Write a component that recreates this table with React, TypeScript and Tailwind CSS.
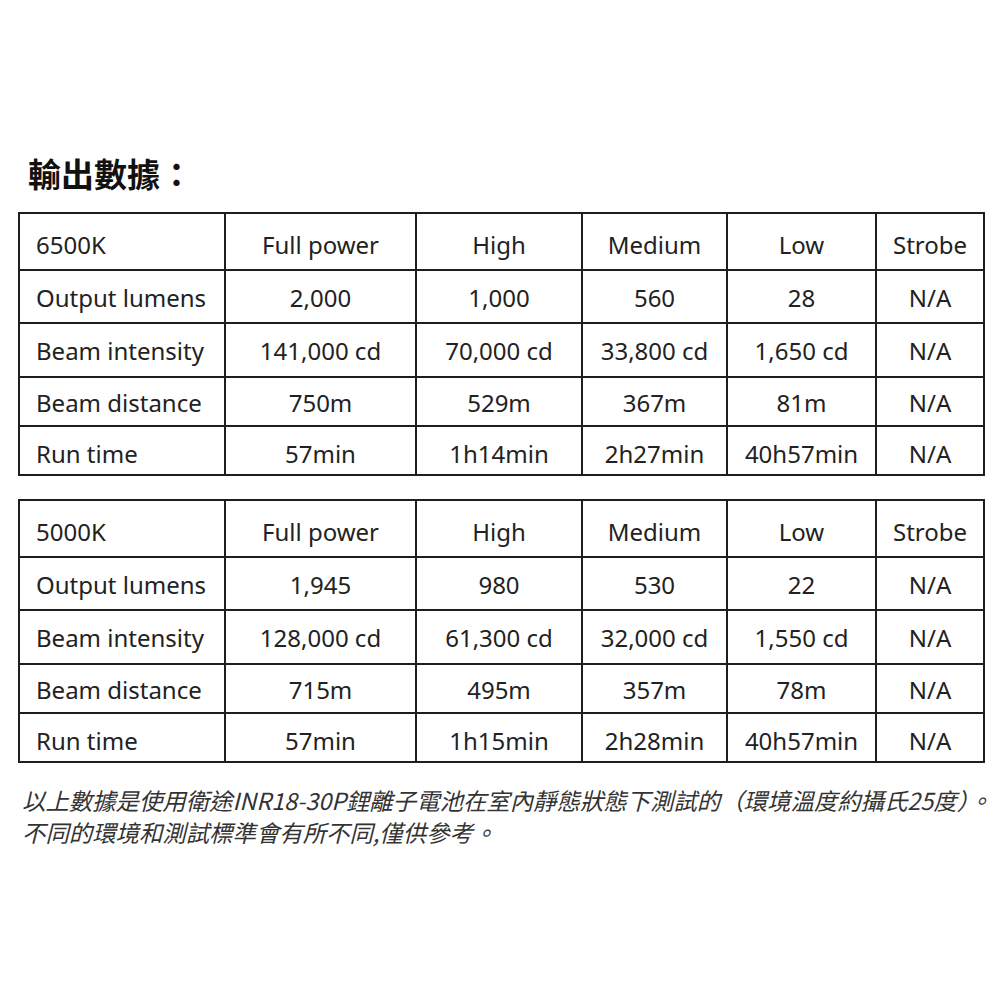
import React from 'react';

interface SpecTable {
  temp: string;
  rows: [string, string[]][];
}

const modes = ['Full power', 'High', 'Medium', 'Low', 'Strobe'];

const tables: SpecTable[] = [
  {
    temp: '6500K',
    rows: [
      ['Output lumens', ['2,000', '1,000', '560', '28', 'N/A']],
      ['Beam intensity', ['141,000 cd', '70,000 cd', '33,800 cd', '1,650 cd', 'N/A']],
      ['Beam distance', ['750m', '529m', '367m', '81m', 'N/A']],
      ['Run time', ['57min', '1h14min', '2h27min', '40h57min', 'N/A']],
    ],
  },
  {
    temp: '5000K',
    rows: [
      ['Output lumens', ['1,945', '980', '530', '22', 'N/A']],
      ['Beam intensity', ['128,000 cd', '61,300 cd', '32,000 cd', '1,550 cd', 'N/A']],
      ['Beam distance', ['715m', '495m', '357m', '78m', 'N/A']],
      ['Run time', ['57min', '1h15min', '2h28min', '40h57min', 'N/A']],
    ],
  },
];

// top padding per row so the text sits where the original puts it
const rowPad = ['pt-[6px]', 'pt-[3px]', 'pt-[2px]', 'pt-[3px]', 'pt-[7px]'];

function Table({ table }: { table: SpecTable }) {
  const all: [string, string[]][] = [[table.temp, modes], ...table.rows];
  return (
    <div className="grid grid-cols-[204px_189px_164px_143px_147px_106px] grid-rows-[55px_51px_52px_47px_47px] gap-[2px] p-[2px] bg-[#1e1e1e] w-[967px]">
      {all.map(([label, values], r) => (
        <React.Fragment key={label}>
          <div className={`bg-white flex items-center pl-4 ${rowPad[r]}`}>{label}</div>
          {values.map((v, i) => (
            <div key={i} className={`bg-white flex items-center justify-center ${rowPad[r]}`}>
              {v}
            </div>
          ))}
        </React.Fragment>
      ))}
    </div>
  );
}

export default function App() {
  return (
    <div className="w-[1000px] h-[1000px] bg-white text-[#222] font-['Noto_Sans','Noto_Sans_CJK_TC',sans-serif]">
      <div className="pt-[157px] pl-[28px]">
        <h1 className="text-[33px] leading-none font-bold text-[#111] font-['Noto_Sans_CJK_TC',sans-serif]">
          輸出數據：
        </h1>
      </div>
      <div className="pl-[18px] pt-[22px] flex flex-col gap-[23px] text-[24px] leading-none">
        {tables.map((t) => (
          <Table key={t.temp} table={t} />
        ))}
      </div>
      <div className="pl-[22px] pt-[21px] text-[23.4px] leading-[32px] italic text-[#333] font-['Noto_Sans_CJK_TC',sans-serif]">
        <p>以上數據是使用衛途INR18-30P鋰離子電池在室內靜態狀態下測試的（環境溫度約攝氏25度）。</p>
        <p>不同的環境和測試標準會有所不同,僅供參考。</p>
      </div>
    </div>
  );
}
